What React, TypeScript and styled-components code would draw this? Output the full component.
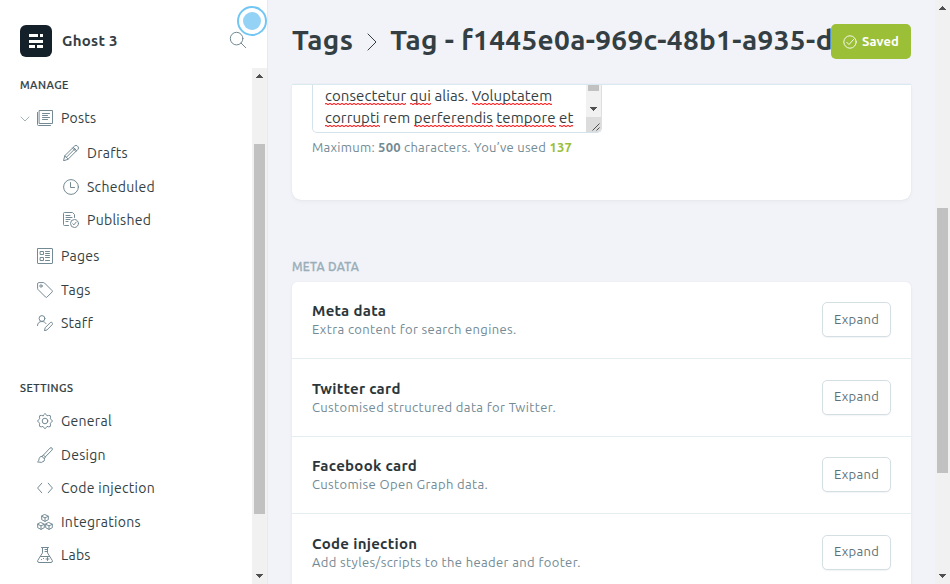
import React from 'react';
import styled, { createGlobalStyle, css } from 'styled-components';

const GlobalStyle = createGlobalStyle`
  * { box-sizing: border-box; }
  html, body { margin: 0; height: 100%; overflow: hidden; }
  body {
    background: #f2f3f8;
    color: #343f44;
    font-family: Ubuntu, "Noto Sans", "Open Sans", sans-serif;
    font-size: 14px;
    letter-spacing: 0.2px;
  }
`;

const Page = styled.div`
  display: flex;
  width: 950px;
  height: 584px;
  overflow: hidden;
`;

const Sidebar = styled.aside`
  display: flex;
  flex-direction: column;
  flex: none;
  width: 268px;
  border-right: 1px solid #e5eaef;
  background: #fff;
`;

const SiteHeader = styled.header`
  position: relative;
  display: flex;
  align-items: center;
  flex: none;
  height: 68px;
  padding: 14px 20px 0;
`;

const Logo = styled.svg`
  width: 32px;
  height: 32px;
  margin-right: 10px;
`;

const SiteName = styled.div`
  flex: 1;
  margin-top: -2px;
  font-size: 15px;
  font-weight: 700;
  letter-spacing: 0.28px;
  color: #343f44;
`;

const SearchButton = styled.button`
  display: flex;
  padding: 0;
  border: 0;
  background: none;
  margin-top: -2px;
`;

const TourMarker = styled.div`
  position: absolute;
  top: 6px;
  left: 237px;
  display: grid;
  place-items: center;
  width: 30px;
  height: 30px;
  border: 2px solid #71c6f3;
  border-radius: 50%;
  background: #fff;

  &::before {
    content: '';
    width: 18px;
    height: 18px;
    border-radius: 50%;
    background: #95d3f6;
  }
`;

const SidebarBody = styled.div`
  display: flex;
  flex: 1;
  min-height: 0;
`;

const Nav = styled.nav`
  flex: 1;
  min-width: 0;
  overflow: hidden;
`;

const NavTitle = styled.h2<{ $gap?: number }>`
  margin: ${p => p.$gap ?? 9}px 0 8px 20px;
  height: 16px;
  line-height: 16px;
  font-size: 11px;
  font-weight: 500;
  letter-spacing: 0.46px;
  -webkit-text-stroke: 0.2px;
`;

const NavList = styled.ul`
  margin: 0;
  padding: 0;
  list-style: none;
`;

const SubList = styled(NavList)`
  padding: 2px 0 2.5px 26px;
`;

const NavItem = styled.li`
  display: flex;
  align-items: center;
  height: 33.5px;
  padding-left: 20px;
  line-height: 20px;
`;

const Twisty = styled.span`
  display: flex;
  width: 17px;
`;

const NavLabel = styled.span`
  margin-left: 8px;
  letter-spacing: 0.28px;
`;

const LineIcon = styled.svg<{ $size?: number }>`
  display: block;
  flex: none;
  width: ${p => p.$size ?? 16}px;
  height: ${p => p.$size ?? 16}px;
  fill: none;
  stroke: #738a94;
  stroke-width: 1;
  stroke-linecap: round;
  stroke-linejoin: round;
`;

const Track = styled.div`
  display: flex;
  flex-direction: column;
  align-items: center;
  flex: none;
  width: 15px;
  background: #f1f1f1;
`;

const Arrow = styled.svg`
  flex: none;
  width: 15px;
  height: 17px;
  fill: #505050;
`;

const Thumb = styled.div<{ $top: number; $height: number }>`
  width: 11px;
  height: ${p => p.$height}px;
  margin-top: ${p => p.$top}px;
  margin-bottom: auto;
  background: #c1c1c1;
`;

const Main = styled.main`
  display: flex;
  flex-direction: column;
  flex: 1;
  min-width: 0;
  padding: 0 24px;
`;

const CanvasHeader = styled.header`
  display: flex;
  align-items: center;
  flex: none;
  height: 84px;
  padding-bottom: 1px;
`;

const Title = styled.h1`
  display: flex;
  align-items: center;
  flex: 1;
  min-width: 0;
  margin: -4px 0 0;
  overflow: hidden;
  font-size: 28px;
  line-height: 40px;
  font-weight: 700;
  letter-spacing: 0.33px;
  white-space: nowrap;
`;

const Crumb = styled.span`
  flex: none;
`;

const Chevron = styled.svg`
  flex: none;
  width: 10px;
  height: 18px;
  margin: 4px 13px 0 14px;
  fill: none;
  stroke: #343f44;
`;

const buttonBase = css`
  display: flex;
  align-items: center;
  justify-content: center;
  flex: none;
  height: 35px;
  padding: 0 0 2px;
  border-radius: 5px;
  font: inherit;
  font-size: 13px;
`;

const SavedButton = styled.button`
  ${buttonBase}
  width: 80px;
  gap: 5px;
  border: 0;
  background: #9bbf37;
  color: #fff;
  font-weight: 700;
  letter-spacing: 0.1px;
`;

const CheckIcon = styled.svg`
  flex: none;
  width: 14px;
  height: 14px;
  margin-top: 2px;
  fill: none;
  stroke: #fff;
  stroke-width: 0.9;
  stroke-linecap: round;
`;

const ExpandButton = styled.button`
  ${buttonBase}
  width: 69px;
  border: 1px solid #d4dfe4;
  background: #fff;
  color: #5d7179;
  letter-spacing: 0.3px;
  box-shadow: 0 1px 1px rgba(100, 120, 140, 0.08);
`;

const cardShadow = css`
  background: #fff;
  box-shadow: 0 0 1px rgba(0, 0, 0, 0.12), 0 2px 4px rgba(0, 0, 0, 0.035);
`;

const FormCard = styled.section`
  ${cardShadow}
  flex: none;
  height: 116px;
  padding: 0 20px;
  border-top: 1px solid #dae8f0;
  border-radius: 0 0 9px 9px;
`;

const TextBox = styled.div`
  display: flex;
  width: 290px;
  height: 48px;
  border: 1px solid #d4e2ea;
  border-top: 0;
  border-radius: 0 0 5px 5px;
  overflow: hidden;
`;

const Copy = styled.p`
  flex: 1;
  margin: 0;
  padding-left: 12px;
  font-size: 15px;
  line-height: 22px;
  letter-spacing: 0.08px;
  white-space: nowrap;
`;

const Misspelled = styled.span`
  padding-bottom: 1px;
  background:
    linear-gradient(90deg, #f33 50%, #fbb 50%) 0 calc(100% - 1px) / 4px 1px repeat-x,
    linear-gradient(90deg, #fbb 50%, #f33 50%) 0 100% / 4px 1px repeat-x;
`;

const BoxTrack = styled(Track)`
  height: 47px;
`;

const Grip = styled.svg`
  flex: none;
  width: 15px;
  height: 15px;
  background: #dcdcdc;
  fill: none;
  stroke: #505050;
`;

const Hint = styled.p`
  margin: 3px 0 0;
  font-size: 13px;
  line-height: 22px;
  letter-spacing: 0.26px;
  color: #738a94;
`;

const Used = styled.b`
  color: #9bbf37;
`;

const SectionTitle = styled.h2`
  margin: 58px 0 6.5px;
  height: 17px;
  font-size: 12px;
  line-height: 17px;
  font-weight: 500;
  letter-spacing: 0.3px;
  color: #9baeb8;
  -webkit-text-stroke: 0.3px;
`;

const Settings = styled.section`
  ${cardShadow}
  flex: none;
  border-radius: 5px 5px 0 0;
`;

const SettingRow = styled.div`
  display: flex;
  justify-content: space-between;
  height: 77.5px;
  padding: 20.5px 20px 0;
  border-bottom: 1px solid #e3edf2;
`;

const RowTitle = styled.h3`
  margin: -1px 0 0;
  font-size: 15px;
  line-height: 20px;
  font-weight: 700;
  letter-spacing: 0.3px;
  color: #2b363b;
`;

const RowText = styled.p`
  margin: -1px 0 0;
  font-size: 13px;
  line-height: 18px;
  letter-spacing: 0.37px;
  color: #738a94;
`;

const icons: Record<string, React.ReactNode> = {
  posts: <><path d="M2.5.5h13v13h-13zM13.5 15.5H1.5a1 1 0 0 1-1-1V2.5M5.5 3.5h7M5.5 5.5h5M5.5 7.5h7M5.5 9.5h5" /></>,
  drafts: <path d="M.6 15.4l1.2-4.7L11.6 1a2 2 0 0 1 2.8 0l.5.6a2 2 0 0 1 0 2.8l-9.7 9.7zM1.8 10.7l3.4 3.4M10.3 2.3l3.4 3.4M3.2 12.5l8.5-8.5M9.5 3.1l3.4 3.4" />,
  scheduled: <><circle cx="8" cy="8" r="7.4" /><path d="M7.5 3.5v5h4" /></>,
  published: <><path d="M5.5 13.5h-4a1 1 0 0 1-1-1v-11a1 1 0 0 1 1-1h8l2 2v3M3 3.5h4M3 5.5h6M3 7.5h4M3 9.5h2" /><circle cx="11.5" cy="11.5" r="4" /><path d="M9.8 11.7l1.1 1.2 2.3-2.8" /></>,
  pages: <path d="M1 .5h14a.5.5 0 0 1 .5.5v14a.5.5 0 0 1-.5.5H1a.5.5 0 0 1-.5-.5V1A.5.5 0 0 1 1 .5zM3.5 3.5h3v3h-3zM3.5 9.5h3v3h-3zM8.5 3.5h4M8.5 5.5h4M8.5 7.5h4M8.5 9.5h4M8.5 12.5h4" />,
  tags: <><path d="M.6 1.6a1 1 0 0 1 1-1h5.1a1 1 0 0 1 .7.3l7.7 7.7a1 1 0 0 1 0 1.4L10 15.1a1 1 0 0 1-1.4 0L.9 7.4a1 1 0 0 1-.3-.7z" /><circle cx="4" cy="4" r="1.2" /></>,
  staff: <><circle cx="5" cy="3.5" r="2.9" /><path d="M.5 10.5c0-2.5 1.8-4 4.5-4 1.8 0 3.2.7 3.9 2M7.5 15.4l.7-2.7 5-5a1.4 1.4 0 0 1 2 2l-5 5z" /></>,
  general: <><circle cx="8" cy="8" r="2.8" /><path d="M6.7 1.6Q8-.7 9.3 1.6L10 2.8l1.4-.4q2.5-.5 2.2 1.8l-.4 1.5 1.2.9q2 1.4 0 2.8l-1.2.9.4 1.5q.3 2.5-2.2 2l-1.4-.4-.7 1.2q-1.3 2-2.6 0L6 13.4l-1.4.4q-2.5.5-2.2-2l.4-1.5-1.2-.9q-2-1.4 0-2.8l1.2-.9-.4-1.5q-.3-2.3 2.2-1.8l1.4.4z" /></>,
  design: <path d="M6.1 8.4L13 1.1q1.1-.9 2 0t0 2L8.2 10M5.3 9.2l1.2-1.1 2 2-1.1 1.2zM5.3 9.2q-2.6-.2-3.1 2.3-.2 2.8-1.7 3.4 4.6 1.4 6.5-.8.9-1.3.4-2.8" />,
  code: <path d="M4.8 3.2L.6 8l4.2 4.8M11.2 3.2L15.4 8l-4.2 4.8" />,
  integrations: <><path d="M8 .6l3.3 1.6v3.5L8 7.4 4.7 5.7V2.2zM4.8 2.3L8 3.9l3.2-1.6M8 3.9v3.4M4 8.6l3.3 1.6v3.5L4 15.4.7 13.7v-3.5zM.8 10.3L4 11.9l3.2-1.6M4 11.9v3.4M12 8.6l3.3 1.6v3.5L12 15.4l-3.3-1.7v-3.5zM8.8 10.3l3.2 1.6 3.2-1.6M12 11.9v3.4" /></>,
  labs: <path d="M4.5.5h7M5.5.5v5.4L.7 13.5q-.5 2 1.3 2h12q1.8 0 1.3-2l-4.8-7.6V.5M8 2.5h2.5M8 4.5h2.5M3.4 9.5h9.2M10.5 10.5v3M9 12h3M4.5 12.5v.2M6.5 11.5v.2" />,
};

const ScrollArrow = ({ down }: { down?: boolean }) => (
  <Arrow viewBox="0 0 15 17">
    <path d={down ? 'M4 7h7v1h-1v1H9v1H8v1H7v-1H6V9H5V8H4z' : 'M7 6h1v1h1v1h1v1h1v1H4V9h1V8h1V7h1z'} />
  </Arrow>
);

const Item = ({ icon, children, open }: { icon: string; children: string; open?: boolean }) => (
  <NavItem>
    <Twisty>
      {open && (
        <LineIcon $size={10} viewBox="0 0 10 10">
          <path d="M1 4l4 4 4-4" opacity=".65" />
        </LineIcon>
      )}
    </Twisty>
    <LineIcon viewBox="0 0 16 16">{icons[icon]}</LineIcon>
    <NavLabel>{children}</NavLabel>
  </NavItem>
);

const settings = [
  ['Meta data', 'Extra content for search engines.'],
  ['Twitter card', 'Customised structured data for Twitter.'],
  ['Facebook card', 'Customise Open Graph data.'],
  ['Code injection', 'Add styles/scripts to the header and footer.'],
];

export default function App() {
  return (
    <Page>
      <GlobalStyle />
      <Sidebar>
        <SiteHeader>
          <Logo viewBox="0 0 32 32">
            <rect width="32" height="32" rx="6" fill="#15212a" />
            <path d="M9 9h9v3H9zM20 9h3v3h-3zM9 15h14v3H9zM9 20h6v3H9zM17 20h6v3h-6z" fill="#fff" />
          </Logo>
          <SiteName>Ghost 3</SiteName>
          <SearchButton aria-label="Search">
            <LineIcon $size={18} viewBox="0 0 18 18">
              <circle cx="7.6" cy="7.6" r="6.3" />
              <path d="M12.1 12.1l4.6 4.6" />
            </LineIcon>
          </SearchButton>
          <TourMarker />
        </SiteHeader>
        <SidebarBody>
          <Nav>
            <NavTitle>MANAGE</NavTitle>
            <NavList>
              <Item icon="posts" open>Posts</Item>
              <SubList>
                <Item icon="drafts">Drafts</Item>
                <Item icon="scheduled">Scheduled</Item>
                <Item icon="published">Published</Item>
              </SubList>
              <Item icon="pages">Pages</Item>
              <Item icon="tags">Tags</Item>
              <Item icon="staff">Staff</Item>
            </NavList>
            <NavTitle $gap={40.4}>SETTINGS</NavTitle>
            <NavList>
              <Item icon="general">General</Item>
              <Item icon="design">Design</Item>
              <Item icon="code">Code injection</Item>
              <Item icon="integrations">Integrations</Item>
              <Item icon="labs">Labs</Item>
            </NavList>
          </Nav>
          <Track>
            <ScrollArrow />
            <Thumb $top={59} $height={370} />
            <ScrollArrow down />
          </Track>
        </SidebarBody>
      </Sidebar>
      <Main>
        <CanvasHeader>
          <Title>
            <Crumb>Tags</Crumb>
            <Chevron viewBox="0 0 10 18"><path d="M.7.7L9 9 .7 17.3" /></Chevron>
            <Crumb>Tag - f1445e0a-969c-48b1-a935-d</Crumb>
          </Title>
          <SavedButton>
            <CheckIcon viewBox="0 0 14 14">
              <circle cx="7" cy="7" r="6.2" />
              <path d="M3.8 7.3l2.2 2.3 4.6-5.2" />
            </CheckIcon>
            Saved
          </SavedButton>
        </CanvasHeader>
        <FormCard>
          <TextBox>
            <Copy>
              <Misspelled>consectetur</Misspelled> <Misspelled>qui</Misspelled> alias. <Misspelled>Voluptatem</Misspelled>
              <br />
              <Misspelled>corrupti</Misspelled> rem <Misspelled>perferendis</Misspelled> <Misspelled>tempore</Misspelled> <Misspelled>et</Misspelled>
            </Copy>
            <BoxTrack>
              <Thumb $top={0} $height={6} />
              <ScrollArrow down />
              <Grip viewBox="0 0 15 15"><path d="M6.5 13.5l7-7M10.5 13.5l3-3" /></Grip>
            </BoxTrack>
          </TextBox>
          <Hint>Maximum: <b>500</b> characters. You’ve used <Used>137</Used></Hint>
        </FormCard>
        <SectionTitle>META DATA</SectionTitle>
        <Settings>
          {settings.map(([title, text]) => (
            <SettingRow key={title}>
              <div>
                <RowTitle>{title}</RowTitle>
                <RowText>{text}</RowText>
              </div>
              <ExpandButton>Expand</ExpandButton>
            </SettingRow>
          ))}
        </Settings>
      </Main>
      <Track>
        <ScrollArrow />
        <Thumb $top={191} $height={265} />
        <ScrollArrow down />
      </Track>
    </Page>
  );
}
